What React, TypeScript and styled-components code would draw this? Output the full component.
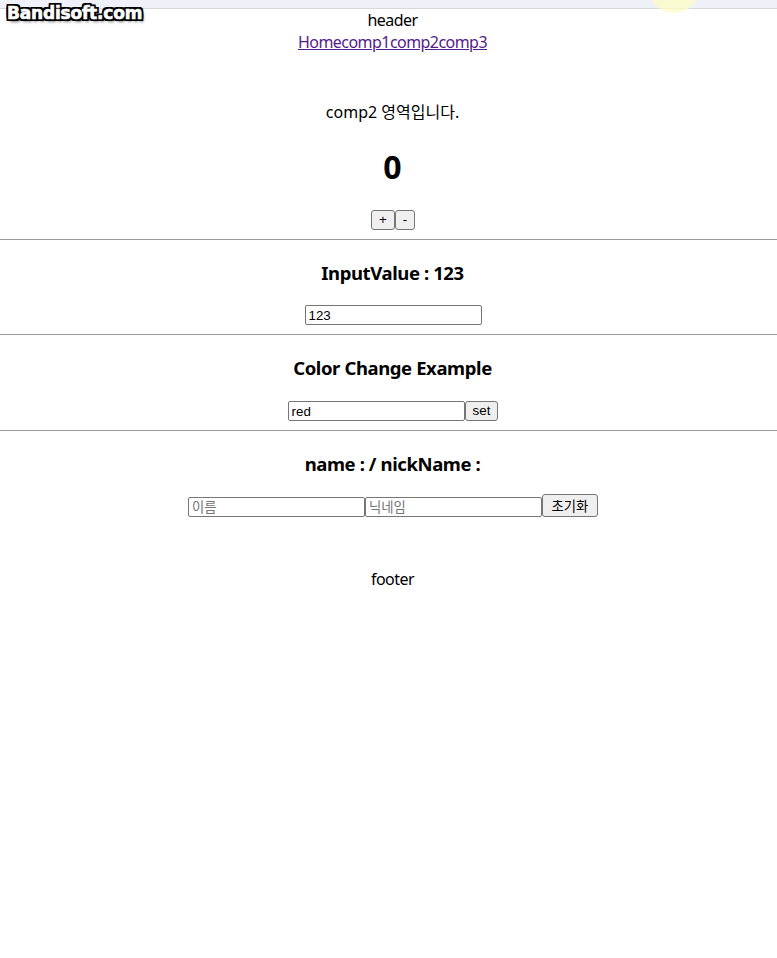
import React from "react";
import styled, { createGlobalStyle } from "styled-components";

const Global = createGlobalStyle`
  html, body { margin: 0; padding: 0; background: #ffffff; }
  body {
    font-family: "Noto Sans", "Noto Sans CJK KR", sans-serif;
    color: #000000;
    font-size: 16px;
  }
`;

const Page = styled.div`
  position: relative;
  display: flex;
  flex-direction: column;
  width: 777px;
  min-height: 958px;
  overflow: hidden;
`;

const BrowserStrip = styled.div`
  height: 8px;
  background: #eef1f8;
  border-bottom: 1px solid #d8d8d8;
`;

const Watermark = styled.div`
  position: absolute;
  left: 7px;
  top: 3px;
  font-family: "DejaVu Sans", sans-serif;
  font-weight: 700;
  font-size: 17px;
  letter-spacing: -0.2px;
  color: #ffffff;
  line-height: 20px;
  -webkit-text-stroke: 0.6px #ffffff;
  text-shadow:
    -2px -2px 0 #000, 2px -2px 0 #000, -2px 2px 0 #000, 2px 2px 0 #000,
    0 -2px 0 #000, 0 2px 0 #000, -2px 0 0 #000, 2px 0 0 #000,
    2px 3px 3px rgba(0,0,0,0.55);
`;

const CursorHalo = styled.div`
  position: absolute;
  left: 648px;
  top: -39px;
  width: 52px;
  height: 52px;
  border-radius: 50%;
  background: radial-gradient(circle, rgba(252, 252, 190, 0.9) 0%, rgba(252, 252, 200, 0.75) 70%, rgba(252, 252, 210, 0) 100%);
`;

const Line = styled.div<{ $top?: number; $tight?: boolean }>`
  padding-left: 8px;
  text-align: center;
  line-height: 22px;
  margin-top: ${(p) => p.$top ?? 0}px;
  letter-spacing: ${(p) => (p.$tight ? "-0.55px" : "0")};
`;

const NavLink = styled.a`
  color: #551a8b;
  text-decoration: underline;
`;

const Count = styled.h1`
  margin: 23px 0 0;
  padding-left: 8px;
  text-align: center;
  font-size: 32px;
  font-weight: 700;
  line-height: 42px;
`;

const Title = styled.h3`
  margin: 20px 0 0;
  padding-left: 8px;
  text-align: center;
  font-size: 18.5px;
  font-weight: 700;
  line-height: 25px;
  letter-spacing: -0.4px;
`;

const Row = styled.div<{ $top: number }>`
  margin-top: ${(p) => p.$top}px;
  padding-left: 9px;
  display: flex;
  justify-content: center;
  align-items: flex-end;
`;

const Divider = styled.hr`
  margin: 9px 0 0;
  height: 0;
  border: none;
  border-top: 1px solid #9a9a9a;
`;

const Button = styled.button<{ $kr?: boolean }>`
  box-sizing: border-box;
  height: ${(p) => (p.$kr ? 23 : 20)}px;
  padding: 0 ${(p) => (p.$kr ? 8.5 : 7)}px;
  margin: 0;
  border: 1px solid #767676;
  border-radius: 3px;
  background: #efefef;
  color: #000;
  font-family: ${(p) => (p.$kr ? '"Noto Sans CJK KR"' : '"Liberation Sans"')}, sans-serif;
  font-size: 13.33px;
  line-height: ${(p) => (p.$kr ? 19 : 16)}px;
`;

const TextInput = styled.input`
  box-sizing: border-box;
  width: 177px;
  height: 20px;
  margin: 0;
  padding: 1px 3px;
  border: 1px solid #767676;
  border-radius: 2px;
  background: #ffffff;
  color: #000;
  font-family: "Liberation Sans", "Noto Sans CJK KR", sans-serif;
  font-size: 13.33px;
  outline: none;
  &::placeholder {
    color: #757575;
  }
`;

export default function App() {
  return (
    <Page>
      <Global />
      <BrowserStrip />
      <Watermark>Bandisoft.com</Watermark>
      <CursorHalo />
      <Line $tight>header</Line>
      <Line $tight>
        <NavLink href="#">Home</NavLink>
        <NavLink href="#">comp1</NavLink>
        <NavLink href="#">comp2</NavLink>
        <NavLink href="#">comp3</NavLink>
      </Line>
      <Line $top={48}>comp2 영역입니다.</Line>
      <Count>0</Count>
      <Row $top={22}>
        <Button>+</Button>
        <Button>-</Button>
      </Row>
      <Divider />
      <Title>InputValue : 123</Title>
      <Row $top={20}>
        <TextInput defaultValue="123" />
      </Row>
      <Divider />
      <Title>Color Change Example</Title>
      <Row $top={21}>
        <TextInput defaultValue="red" />
        <Button>set</Button>
      </Row>
      <Divider />
      <Title>name : / nickName :</Title>
      <Row $top={18}>
        <TextInput placeholder="이름" />
        <TextInput placeholder="닉네임" />
        <Button $kr>초기화</Button>
      </Row>
      <Line $top={51} $tight>footer</Line>
    </Page>
  );
}
